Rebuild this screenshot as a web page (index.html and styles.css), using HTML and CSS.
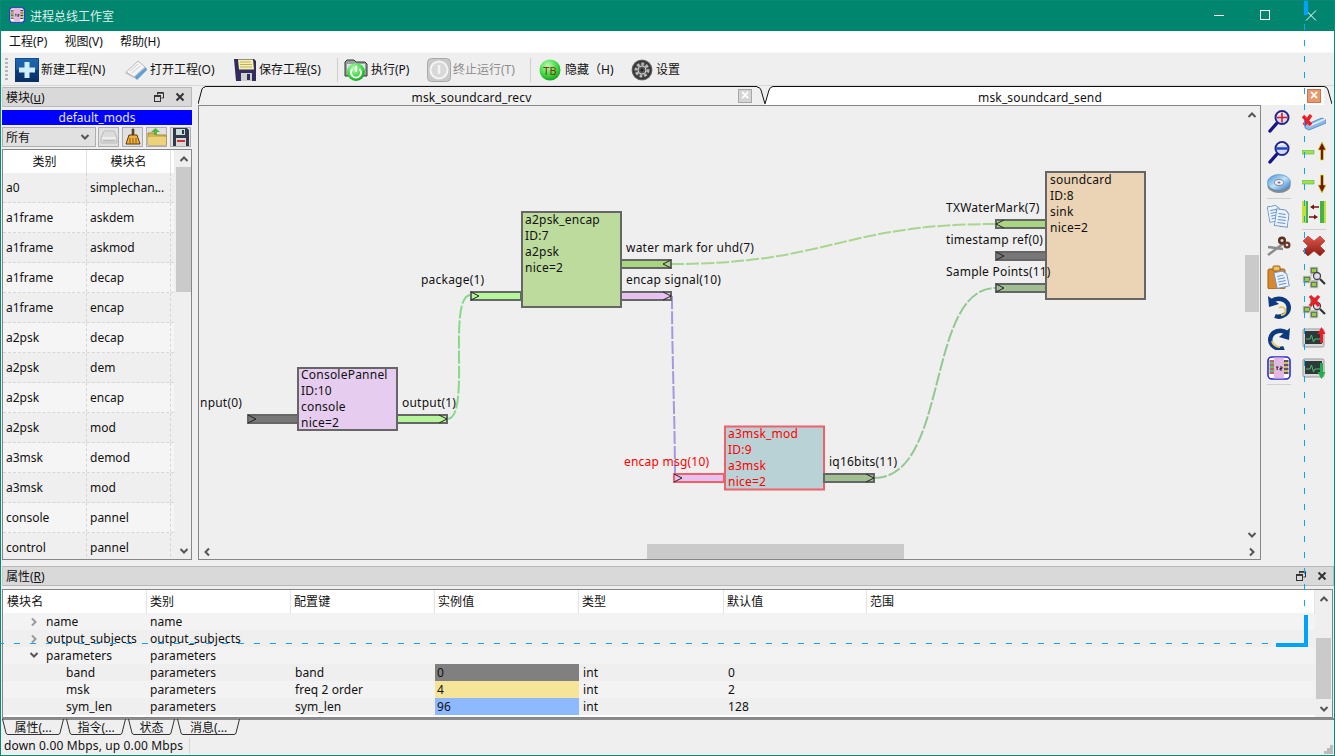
FILE: index.html
```html
<!DOCTYPE html>
<html lang="zh">
<head>
<meta charset="utf-8">
<title>进程总线工作室</title>
<link rel="stylesheet" href="styles.css">
</head>
<body>
<svg class="defs" aria-hidden="true">
  <defs>
    <linearGradient id="gBlue" x1="0" y1="0" x2="0" y2="1"><stop offset="0" stop-color="#0b4f96"/><stop offset="1" stop-color="#0a2f63"/></linearGradient>
    <radialGradient id="gGreen" cx=".4" cy=".3" r=".8"><stop offset="0" stop-color="#b8ffb0"/><stop offset=".6" stop-color="#35d53a"/><stop offset="1" stop-color="#0c8f1a"/></radialGradient>
    <radialGradient id="gGear" cx=".5" cy=".5" r=".55"><stop offset="0" stop-color="#8a8a8a"/><stop offset=".75" stop-color="#333"/><stop offset="1" stop-color="#aaa"/></radialGradient>
    <linearGradient id="gCd" x1="0" y1="0" x2="1" y2="1"><stop offset="0" stop-color="#3f8fd8"/><stop offset=".5" stop-color="#bfe2f8"/><stop offset="1" stop-color="#2070c0"/></linearGradient>
    <linearGradient id="gRed" x1="0" y1="0" x2="0" y2="1"><stop offset="0" stop-color="#e2564a"/><stop offset="1" stop-color="#8a1c12"/></linearGradient>
    <symbol id="i-module" viewBox="0 0 24 24">
      <rect x="1" y="1" width="22" height="22" rx="4" fill="#fff" stroke="#2a2ad8" stroke-width="1.6"/>
      <rect x="7" y="1.5" width="10" height="21" fill="#e3b9e3"/>
      <path d="M2.5 5h4.500M2.500 9h4.500M2.500 13h4.500M2.500 17h4.500" stroke="#a33" stroke-width="1.500"/>
      <path d="M2.500 7h4.500M2.500 11h4.500M2.500 15h4.500" stroke="#3a3" stroke-width="1.500"/>
      <path d="M17 5h4.500M17 9h4.500M17 13h4.500M17 17h4.500" stroke="#222" stroke-width="1.500"/>
      <path d="M17 7h4.500M17 11h4.500M17 15h4.500" stroke="#c9a227" stroke-width="1.500"/>
      <path d="M9 11h2.500M10.200 11v3M13 11h2v1.500h-2v1.500h2" fill="none" stroke="#222" stroke-width="1"/>
    </symbol>
    <symbol id="i-float" viewBox="0 0 10 10">
      <path d="M3.500 2.500V.5h6v5.500H7.500" fill="none" stroke="#333" stroke-width="1"/>
      <path d="M3 1h6" stroke="#333" stroke-width="1.500"/>
      <rect x=".5" y="3.500" width="6" height="6" fill="none" stroke="#333"/>
      <path d="M.5 4.200h6" stroke="#333" stroke-width="1.500"/>
    </symbol>
    <symbol id="i-close" viewBox="0 0 10 10">
      <path d="M1.500 1.500l7 7M8.500 1.500l-7 7" stroke="#333" stroke-width="2"/>
    </symbol>
    <symbol id="i-up" viewBox="0 0 10 6">
      <path d="M1.500 5L5 1.500 8.500 5" fill="none" stroke="#555" stroke-width="2"/>
    </symbol>
    <symbol id="i-down" viewBox="0 0 10 6">
      <path d="M1.500 1L5 4.500 8.500 1" fill="none" stroke="#555" stroke-width="2"/>
    </symbol>
    <symbol id="i-left" viewBox="0 0 6 10">
      <path d="M5 1.500L1.500 5 5 8.500" fill="none" stroke="#555" stroke-width="2"/>
    </symbol>
    <symbol id="i-right" viewBox="0 0 6 10">
      <path d="M1 1.500L4.500 5 1 8.500" fill="none" stroke="#555" stroke-width="2"/>
    </symbol>
    <symbol id="i-mag" viewBox="0 0 24 24">
      <path d="M10.500 13.500L3 22" stroke="#14148c" stroke-width="3.400" stroke-linecap="round"/>
      <circle cx="15" cy="8.500" r="6.500" fill="#d3dcf2" stroke="#24248f" stroke-width="2"/>
      <path d="M11.500 5.500a5 5 0 0 1 6-1" fill="none" stroke="#fff" stroke-width="1.200"/>
    </symbol>
    <symbol id="i-doc" viewBox="0 0 14 18">
      <path d="M.5.500h9l4 4v13H.5z" fill="#eaf3ff" stroke="#6d93c8"/>
      <path d="M3 5h7M3 8h8M3 11h8M3 14h8" stroke="#6d93c8"/>
    </symbol>
    <symbol id="i-net" viewBox="0 0 24 24">
      <path d="M6 15L12 6l4 10z" fill="none" stroke="#999"/>
      <rect x="8" y="2" width="8" height="7" fill="#6c7a5c" stroke="#ddd"/>
      <rect x="1" y="11" width="8" height="7" fill="#6c7a5c" stroke="#ddd"/>
      <rect x="8" y="16" width="8" height="7" fill="#6c7a5c" stroke="#ddd"/>
      <rect x="10" y="4" width="4" height="3" fill="#8fd13f"/>
      <rect x="3" y="13" width="4" height="3" fill="#8fd13f"/>
      <rect x="10" y="18" width="4" height="3" fill="#8fd13f"/>
      <circle cx="15" cy="11" r="3.500" fill="#dde" stroke="#444" stroke-width="1.300"/>
      <path d="M18 14l5 5" stroke="#333" stroke-width="2.200"/>
    </symbol>
    <symbol id="i-mon" viewBox="0 0 24 24">
      <rect x="1" y="3" width="21" height="18" rx="1.500" fill="#d8d8d8" stroke="#999"/>
      <rect x="3" y="5" width="17" height="13" fill="#2c3a3c"/>
      <path d="M4 13h4l1.500-4 2 7 1.500-3h6" fill="none" stroke="#58b86a"/>
    </symbol>
  </defs>
</svg>

<div class="window">
  <header class="titlebar">
    <svg class="title-icon" width="16" height="16"><use href="#i-module"/></svg>
    <span class="title-text">进程总线工作室</span>
    <div class="win-controls">
      <svg class="win-btn" width="46" height="30" viewBox="0 0 46 30"><path d="M18 14.500h10" stroke="#fff"/></svg>
      <svg class="win-btn" width="46" height="30" viewBox="0 0 46 30"><rect x="18.500" y="9.500" width="9" height="9" fill="none" stroke="#fff"/></svg>
      <svg class="win-btn" width="46" height="30" viewBox="0 0 46 30"><path d="M18 9.500l10 10M28 9.500l-10 10" stroke="#fff"/></svg>
    </div>
  </header>

  <nav class="menubar">
    <span class="menu-item">工程(P)</span>
    <span class="menu-item">视图(V)</span>
    <span class="menu-item">帮助(H)</span>
  </nav>

  <div class="toolbar">
    <span class="grip"></span>
    <div class="tool t-new">
      <svg width="24" height="24" viewBox="0 0 24 24"><rect width="24" height="24" fill="url(#gBlue)"/><rect x="1" y="1" width="22" height="11" fill="#2f7cc4" opacity=".5"/><path d="M12 4v16M4 12h16" stroke="#cfeeff" stroke-width="5"/></svg>
      <span>新建工程(N)</span>
    </div>
    <div class="tool t-open">
      <svg width="24" height="24" viewBox="0 0 24 24"><path d="M1 15L11 7l9 6-8 8z" fill="#bbb"/><path d="M2 14L14 3l7 6L10 19z" fill="#f4f4f4" stroke="#bbb"/><path d="M11 19L22 9l1 3-10 10z" fill="#5d9fd6"/><path d="M6 13l8-7M8 15l8-7" stroke="#ccc"/></svg>
      <span>打开工程(O)</span>
    </div>
    <div class="tool t-save">
      <svg width="24" height="24" viewBox="0 0 24 24"><path d="M1 1h20l2 2v20H3z" fill="#312b5e"/><path d="M5 1.500h15l1 10H6z" fill="#f8f0a8"/><path d="M7 4h11M7 6.500h12M7 9h12" stroke="#b9b070"/><rect x="8" y="15" width="11" height="8" fill="#cfcfcf"/><rect x="14" y="16" width="3" height="6" fill="#312b5e"/></svg>
      <span>保存工程(S)</span>
    </div>
    <span class="tool-sep"></span>
    <div class="tool t-run">
      <svg width="24" height="24" viewBox="0 0 24 24"><path d="M1 4l2-2h7l2 2h9l2 2v12H1z" fill="#9aa0a0" stroke="#333"/><rect x="3" y="6" width="18" height="10" fill="#d8e6e6"/><circle cx="12" cy="14" r="9" fill="url(#gGreen)"/><path d="M8.500 11a5 5 0 1 0 7 0" fill="none" stroke="#fff" stroke-width="1.800"/><path d="M12 8v6" stroke="#fff" stroke-width="2"/></svg>
      <span>执行(P)</span>
    </div>
    <div class="tool t-stop tool-off">
      <svg width="24" height="24" viewBox="0 0 24 24"><rect x=".5" y=".5" width="23" height="23" rx="4" fill="#c9c9c9" stroke="#aaa"/><circle cx="12" cy="12" r="8.500" fill="#d8d8d8" stroke="#f4f4f4" stroke-width="2"/><path d="M12 7v9" stroke="#f4f4f4" stroke-width="2.500"/></svg>
      <span>终止运行(T)</span>
    </div>
    <span class="tool-sep sep2"></span>
    <div class="tool t-hide">
      <svg width="22" height="22" viewBox="0 0 22 22"><circle cx="11" cy="11" r="10.500" fill="url(#gGreen)"/><text class="tb-text" x="11" y="15.500" text-anchor="middle">TB</text></svg>
      <span>隐藏（H)</span>
    </div>
    <div class="tool t-set">
      <svg width="22" height="22" viewBox="0 0 22 22"><circle cx="11" cy="11" r="10.500" fill="url(#gGear)"/><circle cx="11" cy="11" r="6" fill="none" stroke="#bbb" stroke-width="3" stroke-dasharray="2.500 2"/><circle cx="11" cy="11" r="4" fill="#555" stroke="#ccc"/><circle cx="11" cy="11" r="1.500" fill="#222"/></svg>
      <span>设置</span>
    </div>
  </div>

  <main class="main">
    <aside class="left-dock">
      <div class="dock-title">
        <span class="dock-name">模块(<u>u</u>)</span>
        <svg class="dock-ic" width="10" height="10"><use href="#i-float"/></svg>
        <svg class="dock-ic dock-x" width="10" height="10"><use href="#i-close"/></svg>
      </div>
      <div class="mods-bar">default_mods</div>
      <div class="combo-row">
        <div class="combo"><span class="combo-text">所有</span><svg width="10" height="6"><use href="#i-down"/></svg></div>
        <div class="icon-btn"><svg width="18" height="16" viewBox="0 0 18 16"><path d="M4 2h10l3 7v5H1V9z" fill="#dcdcdc" stroke="#bbb"/><path d="M2 9h14" stroke="#fff"/><rect x="3" y="11" width="12" height="1.500" fill="#bbb"/></svg></div>
        <div class="icon-btn"><svg width="18" height="18" viewBox="0 0 18 18"><path d="M8 1h2v6H8z" fill="#7a4a12" stroke="#333" stroke-width=".6"/><path d="M5 7h8l3 9H2z" fill="#f2b23c" stroke="#5a3a10"/><path d="M6 10v6M9 10v6M12 10v6" stroke="#8a5a14"/></svg></div>
        <div class="icon-btn"><svg width="20" height="18" viewBox="0 0 20 18"><path d="M1 5h6l2 2h10v10H1z" fill="#d9b550" stroke="#a8853a"/><path d="M1 9h18v8H1z" fill="#ecd27a"/><path d="M7 7V4H4l4.500-4L13 4h-3v3z" fill="#4cb83c"/></svg></div>
        <div class="icon-btn"><svg width="16" height="18" viewBox="0 0 16 18"><path d="M0 0h14l2 2v16H0z" fill="#2c3a4c"/><rect x="3" y="1" width="9" height="6" fill="#cdd"/><rect x="3" y="10" width="10" height="8" fill="#d9d9d9"/><rect x="9" y="2" width="2" height="4" fill="#2c3a4c"/><rect x="4" y="12" width="8" height="2" fill="#c33"/></svg></div>
      </div>
      <div class="mod-table">
        <div class="mod-body">
          <div class="mod-row mod-head"><span>类别</span><span>模块名</span></div>
          <div class="mod-row"><span>a0</span><span>simplechan...</span></div>
          <div class="mod-row alt"><span>a1frame</span><span>askdem</span></div>
          <div class="mod-row"><span>a1frame</span><span>askmod</span></div>
          <div class="mod-row alt"><span>a1frame</span><span>decap</span></div>
          <div class="mod-row"><span>a1frame</span><span>encap</span></div>
          <div class="mod-row alt"><span>a2psk</span><span>decap</span></div>
          <div class="mod-row"><span>a2psk</span><span>dem</span></div>
          <div class="mod-row alt"><span>a2psk</span><span>encap</span></div>
          <div class="mod-row"><span>a2psk</span><span>mod</span></div>
          <div class="mod-row alt"><span>a3msk</span><span>demod</span></div>
          <div class="mod-row"><span>a3msk</span><span>mod</span></div>
          <div class="mod-row alt"><span>console</span><span>pannel</span></div>
          <div class="mod-row"><span>control</span><span>pannel</span></div>
        </div>
        <div class="vscroll vs-mods">
          <div class="sb-btn"><svg width="10" height="6"><use href="#i-up"/></svg></div>
          <div class="sb-track"><div class="sb-thumb"></div></div>
          <div class="sb-btn"><svg width="10" height="6"><use href="#i-down"/></svg></div>
        </div>
      </div>
    </aside>

    <section class="center">
      <div class="tabbar">
        <div class="tab tab-a">
          <svg class="tab-edge" width="7" height="19" viewBox="0 0 7 19"><path d="M0 18L4 3Q5 1 7 1" fill="#f0f0f0" stroke="#111"/></svg>
          <div class="tab-body"><span class="tab-label">msk_soundcard_recv</span><span class="tab-x">×</span></div>
          <svg class="tab-edge" width="8" height="19" viewBox="0 0 8 19"><path d="M0 1Q3 1 4 4L8 18" fill="#f0f0f0" stroke="#111"/></svg>
        </div>
        <div class="tab tab-b">
          <svg class="tab-edge" width="8" height="19" viewBox="0 0 8 19"><path d="M0 18L4 4Q5 1 8 .5V19H0z" fill="#fff"/><path d="M0 18L4 4Q5 1 8 .5" fill="none" stroke="#111"/></svg>
          <div class="tab-body"><span class="tab-label">msk_soundcard_send</span><span class="tab-x tab-x-on">×</span></div>
          <svg class="tab-edge" width="8" height="19" viewBox="0 0 8 19"><path d="M0 .5Q3 .5 4 4L8 18" fill="none" stroke="#111"/></svg>
        </div>
      </div>
      <div class="canvas-frame">
        <div class="canvas-top">
          <svg class="graph" width="1045" height="437" viewBox="199 106 1045 437">
            <g class="wires">
              <path class="w-green" d="M447 419C472 419 446 295 471 295"/>
              <path class="w-olive" d="M671 264C830 264 840 224 996 224"/>
              <path class="w-purple" d="M672 296C672 360 675 420 675 478"/>
              <path class="w-sage" d="M874 478C950 478 925 288 996 288"/>
            </g>

            <rect class="port p-gray" x="248" y="415" width="50" height="8"/>
            <path class="arrow" d="M248 415l8 4-8 4"/>
            <rect class="node n-purple" x="298" y="368" width="99" height="62"/>
            <rect class="port p-light" x="397" y="415" width="50" height="8"/>
            <path class="arrow" d="M439 415l8 4-8 4"/>
            <text class="lbl" x="200" y="407">nput(0)</text>
            <text class="lbl" x="402" y="407">output(1)</text>
            <text class="lbl" x="301" y="379">ConsolePannel</text>
            <text class="lbl" x="301" y="395">ID:10</text>
            <text class="lbl" x="301" y="411">console</text>
            <text class="lbl" x="301" y="427">nice=2</text>

            <rect class="port p-light" x="471" y="292" width="50" height="8"/>
            <path class="arrow" d="M471 292l8 4-8 4"/>
            <rect class="node n-green" x="522" y="212" width="99" height="95"/>
            <rect class="port p-olive" x="621" y="260" width="50" height="8"/>
            <path class="arrow" d="M671 260l-8 4 8 4"/>
            <rect class="port p-lilac" x="621" y="292" width="50" height="8"/>
            <path class="arrow" d="M663 292l8 4-8 4"/>
            <text class="lbl" x="421" y="284">package(1)</text>
            <text class="lbl" x="626" y="252">water mark for uhd(7)</text>
            <text class="lbl" x="626" y="284">encap signal(10)</text>
            <text class="lbl" x="525" y="224">a2psk_encap</text>
            <text class="lbl" x="525" y="240">ID:7</text>
            <text class="lbl" x="525" y="256">a2psk</text>
            <text class="lbl" x="525" y="272">nice=2</text>

            <rect class="port p-olive" x="996" y="220" width="50" height="8"/>
            <path class="arrow" d="M1004 220l-8 4 8 4"/>
            <rect class="port p-gray" x="996" y="252" width="50" height="8"/>
            <path class="arrow" d="M996 252l8 4-8 4"/>
            <rect class="port p-sage" x="996" y="284" width="50" height="8"/>
            <path class="arrow" d="M996 284l8 4-8 4"/>
            <rect class="node n-sand" x="1046" y="172" width="99" height="127"/>
            <text class="lbl" x="946" y="212">TXWaterMark(7)</text>
            <text class="lbl" x="946" y="244">timestamp ref(0)</text>
            <text class="lbl" x="946" y="276">Sample Points(11)</text>
            <text class="lbl" x="1050" y="184">soundcard</text>
            <text class="lbl" x="1050" y="200">ID:8</text>
            <text class="lbl" x="1050" y="216">sink</text>
            <text class="lbl" x="1050" y="232">nice=2</text>

            <rect class="port p-lilac p-sel" x="674" y="474" width="50" height="8"/>
            <path class="arrow" d="M674 474l8 4-8 4"/>
            <rect class="node n-teal" x="725" y="426.500" width="99" height="63"/>
            <rect class="port p-sage" x="824" y="474" width="50" height="8"/>
            <path class="arrow" d="M866 474l8 4-8 4"/>
            <text class="lbl lbl-red" x="624" y="466">encap msg(10)</text>
            <text class="lbl" x="829" y="466">iq16bits(11)</text>
            <text class="lbl lbl-red" x="728" y="438">a3msk_mod</text>
            <text class="lbl lbl-red" x="728" y="454">ID:9</text>
            <text class="lbl lbl-red" x="728" y="470">a3msk</text>
            <text class="lbl lbl-red" x="728" y="486">nice=2</text>
          </svg>
          <div class="vscroll vs-canvas">
            <div class="sb-btn"><svg width="10" height="6"><use href="#i-up"/></svg></div>
            <div class="sb-track"><div class="sb-thumb"></div></div>
            <div class="sb-btn"><svg width="10" height="6"><use href="#i-down"/></svg></div>
          </div>
        </div>
        <div class="hscroll">
          <div class="sb-btn"><svg width="6" height="10"><use href="#i-left"/></svg></div>
          <div class="hs-track"><div class="hs-thumb"></div></div>
          <div class="sb-btn"><svg width="6" height="10"><use href="#i-right"/></svg></div>
        </div>
      </div>
    </section>

    <aside class="side-tools">
      <div class="side-col">
        <div class="side-btn"><svg width="24" height="24" viewBox="0 0 24 24"><use href="#i-mag"/><path d="M15 3.500v10M10 8.500h10" stroke="#e01a1a" stroke-width="1.600"/></svg></div>
        <div class="side-btn"><svg width="24" height="24" viewBox="0 0 24 24"><use href="#i-mag"/><path d="M9.500 8.500h11" stroke="#1b3fd0" stroke-width="2.400"/></svg></div>
        <div class="side-btn"><svg width="24" height="24" viewBox="0 0 24 24"><ellipse cx="12" cy="15.500" rx="11.500" ry="7.500" fill="#8a8a8a"/><ellipse cx="12" cy="12.500" rx="11.500" ry="8" fill="url(#gCd)" stroke="#4b8ac4" stroke-width=".6"/><ellipse cx="12" cy="12.500" rx="4.500" ry="3" fill="#eef" stroke="#888"/><ellipse cx="12" cy="12.500" rx="1.500" ry="1" fill="#777"/></svg></div>
        <span class="side-sep"></span>
        <div class="side-btn"><svg width="24" height="24" viewBox="0 0 24 24"><g transform="rotate(-10 8 10)"><use href="#i-doc" x="1" y="1" width="13" height="17"/></g><g transform="rotate(8 15 14)"><use href="#i-doc" x="8" y="5" width="14" height="18"/></g></svg></div>
        <div class="side-btn"><svg width="24" height="24" viewBox="0 0 24 24"><path d="M1 21L17 9M1 13l15 2" stroke="#8b8b8b" stroke-width="2.500"/><circle cx="15" cy="6.500" r="4" fill="#5b2e22"/><circle cx="20" cy="11" r="3.500" fill="#6b3a2a"/><circle cx="15" cy="6.500" r="1.500" fill="#ddd"/><circle cx="20" cy="11" r="1.300" fill="#ddd"/></svg></div>
        <div class="side-btn"><svg width="24" height="24" viewBox="0 0 24 24"><rect x="1" y="4" width="17" height="20" rx="1.500" fill="#d9892b" stroke="#9a5a16"/><rect x="6" y="1" width="7" height="5" rx="1" fill="#f1c356" stroke="#9a5a16"/><g transform="rotate(-12 14 14)"><use href="#i-doc" x="7" y="6" width="15" height="17"/></g></svg></div>
        <div class="side-btn"><svg width="24" height="24" viewBox="0 0 24 24"><path d="M5 6a10 9 0 1 1 3 15" fill="none" stroke="#0d3a7c" stroke-width="4.500"/><path d="M12 13a4 4 0 1 1 2 7" fill="none" stroke="#e8c763" stroke-width="2"/><path d="M1 1l1 11 10-3z" fill="#0d3a7c"/></svg></div>
        <div class="side-btn"><svg width="24" height="24" viewBox="0 0 24 24"><path d="M20 7a10 9 0 1 0-3 15" fill="none" stroke="#0d3a7c" stroke-width="4.500"/><path d="M5 15a8 7 0 0 0 8 6" fill="none" stroke="#e8c763" stroke-width="2"/><path d="M23 2l-1 12-10-3z" fill="#0d3a7c"/></svg></div>
        <div class="side-btn"><svg width="24" height="24"><use href="#i-module"/></svg></div>
        <span class="side-sep"></span>
      </div>
      <div class="side-col">
        <div class="side-btn"><svg width="24" height="24" viewBox="0 0 24 24"><path d="M3 16L20 9l4 2v3L7 21l-4-2z" fill="#8fb9e6" stroke="#5a8fca"/><path d="M7 17l16-7" stroke="#e4f0fb" stroke-width="1.500"/><path d="M1 7l8 9M9 6l-7 10" stroke="#ee1c25" stroke-width="3.400"/></svg></div>
        <div class="side-btn"><svg width="24" height="24" viewBox="0 0 24 24"><rect x="0" y="10.500" width="12" height="3.500" fill="#9fe34a" stroke="#5fb04a" stroke-width=".6"/><path d="M20 2l4 8h-2.500v10h-3V10H16z" fill="#7b1212" stroke="#cfe028" stroke-width=".8"/></svg></div>
        <div class="side-btn"><svg width="24" height="24" viewBox="0 0 24 24"><rect x="0" y="10.500" width="12" height="3.500" fill="#9fe34a" stroke="#5fb04a" stroke-width=".6"/><path d="M20 23l4-8h-2.500V5h-3v10H16z" fill="#7b1212" stroke="#cfe028" stroke-width=".8"/></svg></div>
        <div class="side-btn"><svg width="24" height="24" viewBox="0 0 24 24"><rect x="0" y="1" width="4" height="22" fill="#c4e03a"/><rect x="4" y="1" width="2" height="22" fill="#45b34a"/><rect x="18" y="1" width="4" height="22" fill="#45b34a"/><rect x="22" y="1" width="2" height="22" fill="#c4e03a"/><path d="M8 7l4-2.500v1.800h5v1.400h-5v1.800zM16 17l-4-2.500v1.800H7v1.400h5v1.800z" fill="#7b1212"/></svg></div>
        <span class="side-sep"></span>
        <div class="side-btn"><svg width="24" height="24" viewBox="0 0 24 24"><path d="M6 2l6 5 6-5 5 5-5 5 5 5-5 5-6-5-6 5-5-5 5-5-5-5z" fill="url(#gRed)" stroke="#a33" stroke-width=".6"/></svg></div>
        <div class="side-btn"><svg width="24" height="24"><use href="#i-net"/></svg></div>
        <div class="side-btn"><svg width="24" height="24"><use href="#i-net"/><path d="M8 1l9 10M17 1L8 11" stroke="#ee1c25" stroke-width="3.200"/></svg></div>
        <div class="side-btn"><svg width="24" height="24" viewBox="0 0 24 24"><use href="#i-mon"/><path d="M19.500 1l4 7h-2.500v9h-3V8H15.500z" fill="#ee1c25"/></svg></div>
        <div class="side-btn"><svg width="24" height="24" viewBox="0 0 24 24"><use href="#i-mon"/><path d="M19.500 23l4-7h-2.500V7h-3v9H15.500z" fill="#22b04c"/></svg></div>
      </div>
    </aside>
  </main>

  <div class="dock-title dock-wide">
    <span class="dock-name">属性(<u>R</u>)</span>
    <svg class="dock-ic" width="10" height="10"><use href="#i-float"/></svg>
    <svg class="dock-ic dock-x2" width="10" height="10"><use href="#i-close"/></svg>
  </div>

  <div class="prop-table">
    <div class="prop-body">
      <div class="prop-row prop-head"><span>模块名</span><span>类别</span><span>配置键</span><span>实例值</span><span>类型</span><span>默认值</span><span>范围</span></div>
      <div class="prop-row r1"><span class="tree l1"><svg class="ch-shut" width="6" height="10"><use href="#i-right"/></svg>name</span><span>name</span></div>
      <div class="prop-row r2"><span class="tree l1"><svg class="ch-shut" width="6" height="10"><use href="#i-right"/></svg>output_subjects</span><span>output_subjects</span></div>
      <div class="prop-row r1"><span class="tree l1"><svg class="ch-open" width="10" height="6"><use href="#i-down"/></svg>parameters</span><span>parameters</span></div>
      <div class="prop-row r2"><span class="tree l2">band</span><span>parameters</span><span>band</span><span class="val v-gray">0</span><span>int</span><span>0</span></div>
      <div class="prop-row r1"><span class="tree l2">msk</span><span>parameters</span><span>freq 2 order</span><span class="val v-yellow">4</span><span>int</span><span>2</span></div>
      <div class="prop-row r2"><span class="tree l2">sym_len</span><span>parameters</span><span>sym_len</span><span class="val v-blue">96</span><span>int</span><span>128</span></div>
    </div>
    <div class="vscroll vs-prop">
      <div class="sb-btn"><svg width="10" height="6"><use href="#i-up"/></svg></div>
      <div class="sb-track"><div class="sb-thumb"></div></div>
      <div class="sb-btn"><svg width="10" height="6"><use href="#i-down"/></svg></div>
    </div>
  </div>

  <div class="bottom-tabs">
    <div class="btab btab-on"><svg width="6" height="16" viewBox="0 0 6 16"><path d="M.5 0L4 14q.5 1.500 2 1.500" fill="none" stroke="#333"/></svg><span class="btab-body b1">属性(...</span><svg width="6" height="16" viewBox="0 0 6 16"><path d="M0 15.500q1.500 0 2-1.500L5.500 0" fill="none" stroke="#333"/></svg></div>
    <div class="btab"><svg width="6" height="16" viewBox="0 0 6 16"><path d="M.5 0L4 14q.5 1.500 2 1.500" fill="none" stroke="#333"/></svg><span class="btab-body b2">指令(...</span><svg width="6" height="16" viewBox="0 0 6 16"><path d="M0 15.500q1.500 0 2-1.500L5.500 0" fill="none" stroke="#333"/></svg></div>
    <div class="btab"><svg width="6" height="16" viewBox="0 0 6 16"><path d="M.5 0L4 14q.5 1.500 2 1.500" fill="none" stroke="#333"/></svg><span class="btab-body b3">状态</span><svg width="6" height="16" viewBox="0 0 6 16"><path d="M0 15.500q1.500 0 2-1.500L5.500 0" fill="none" stroke="#333"/></svg></div>
    <div class="btab"><svg width="6" height="16" viewBox="0 0 6 16"><path d="M.5 0L4 14q.5 1.500 2 1.500" fill="none" stroke="#333"/></svg><span class="btab-body b4">消息(...</span><svg width="6" height="16" viewBox="0 0 6 16"><path d="M0 15.500q1.500 0 2-1.500L5.500 0" fill="none" stroke="#333"/></svg></div>
  </div>

  <footer class="statusbar">
    <span class="status-text">down 0.00 Mbps, up 0.00 Mbps</span>
    <svg class="size-grip" width="9" height="9" viewBox="0 0 9 9"><path d="M6 0h3v3H6zM3 3h3v3H3zM6 3h3v3H6zM0 6h3v3H0zM3 6h3v3H3zM6 6h3v3H6z" fill="#bbb"/></svg>
  </footer>

  <div class="drag drag-v"></div>
  <div class="drag drag-h"></div>
  <div class="drag drag-top"></div>
  <div class="drag drag-cv"></div>
  <div class="drag drag-ch"></div>
</div>
</body>
</html>
```

FILE: styles.css
```css
* { box-sizing: border-box; }
html, body { margin: 0; padding: 0; }
body {
  width: 1335px;
  height: 756px;
  overflow: hidden;
  font-family: "Noto Sans", "Noto Sans CJK SC", sans-serif;
  font-size: 12px;
  line-height: 16px;
  color: #111;
}
.defs { position: absolute; width: 0; height: 0; }
svg { display: block; flex: none; }

.window {
  position: relative;
  width: 1335px;
  height: 756px;
  border: 1px solid #0a8a76;
  background: #efefef;
  display: flex;
  flex-direction: column;
  overflow: hidden;
}

/* title bar */
.titlebar {
  height: 30px;
  background: #00856f;
  display: flex;
  align-items: center;
  padding-left: 8px;
  flex: none;
}
.title-icon { margin-top: -2px; }
.title-text { margin-left: 5px; color: #dff1ec; font-family: "Noto Sans CJK SC", sans-serif; }
.win-controls { margin-left: auto; display: flex; }

/* menu */
.menubar {
  height: 21px;
  background: #fff;
  display: flex;
  align-items: center;
  padding-left: 8px;
  gap: 14.500px;
  flex: none;
}
.menu-item { width: 41px; white-space: nowrap; }

/* toolbar */
.toolbar {
  height: 34px;
  border-top: 1px solid #f6f6f6;
  border-bottom: 1px solid #d8d8d8;
  padding-top: 1px;
  background: #efefef;
  display: flex;
  align-items: center;
  flex: none;
  padding-left: 4px;
}
.grip {
  width: 3px;
  height: 24px;
  background: repeating-linear-gradient(to bottom, #b5b5b5 0 2px, transparent 2px 4px);
  margin-right: 7px;
}
.tool { display: flex; align-items: center; gap: 2px; white-space: nowrap; }
.t-new { width: 109px; }
.t-open { width: 109px; }
.t-save { width: 104px; }
.tool-sep { width: 1px; height: 24px; background: #cfcfcf; margin-right: 6px; }
.t-run { width: 83px; gap: 3px; }
.t-stop { width: 103px; }
.sep2 { margin-right: 8px; }
.t-hide { width: 92px; gap: 4px; }
.t-set { gap: 3px; }
.tool-off { color: #8c8c8c; }
.tb-text { font: 11px "Noto Sans", sans-serif; fill: #8a2a10; }

/* main area */
.main { height: 480px; display: flex; flex: none; }
.left-dock { width: 190px; margin-left: 1px; padding-top: 1px; display: flex; flex-direction: column; flex: none; }

.dock-title {
  height: 20px;
  background: #d9d9d9;
  border: 1px solid #b8b8b8;
  border-left: 1px solid #c8c8c8;
  display: flex;
  align-items: center;
  padding-left: 3px;
  flex: none;
}
.dock-name { flex: 1; padding-top: 2px; }
.dock-ic { margin-right: 11px; }
.dock-x { margin-right: 6px; }

.mods-bar {
  margin-top: 3px;
  height: 15px;
  background: #0000ff;
  color: #e6e6ff;
  text-align: center;
  line-height: 15px;
  flex: none;
}
.combo-row { margin-top: 2px; height: 20px; display: flex; gap: 3px; flex: none; }
.combo {
  width: 94px;
  margin-right: -1px;
  background: #e1e1e1;
  border: 1px solid #adadad;
  display: flex;
  align-items: center;
  justify-content: space-between;
  padding: 0 5px 0 3px;
}
.combo-text { padding-top: 2px; }
.icon-btn {
  width: 21px;
  background: #e1e1e1;
  border: 1px solid #adadad;
  display: flex;
  align-items: center;
  justify-content: center;
}
.mod-table {
  margin-top: 2px;
  height: 411px;
  border: 1px solid #85858a;
  display: flex;
  flex: none;
  overflow: hidden;
}
.mod-body { width: 171px; overflow: hidden; flex: none; }
.mod-row {
  height: 30px;
  display: grid;
  grid-template-columns: 84px 84px;
  background: #efefef;
  border-bottom: 1px dashed #d6d6d6;
}
.mod-row.alt { background: #f5f5f5; }
.mod-row > span {
  padding-left: 3px;
  line-height: 30px;
  border-right: 1px dashed #d6d6d6;
  white-space: nowrap;
  overflow: hidden;
}
.mod-head {
  height: 23px;
  background: #fff;
  border-bottom: 0;
}
.mod-head > span {
  text-align: center;
  padding-left: 0;
  line-height: 24px;
  border-right: 1px solid #e2e2e2;
}

/* scrollbars */
.vscroll { background: #efefef; display: flex; flex-direction: column; flex: none; }
.sb-btn { flex: none; display: flex; align-items: center; justify-content: center; }
.vscroll .sb-btn { height: 17px; }
.sb-track { flex: 1; padding: 0 1px; }
.sb-thumb { background: #cacaca; }
.vs-mods { width: 17px; margin-left: 1px; }
.vs-mods .sb-thumb { height: 125px; }
.vs-canvas { width: 16px; }
.vs-canvas .sb-track { padding-top: 132px; }
.vs-canvas .sb-thumb { height: 57px; }
.vs-prop { width: 17px; }
.vs-prop .sb-track { padding-top: 31px; }
.vs-prop .sb-thumb { height: 61px; }
.hscroll { height: 15px; margin-top: 1px; display: flex; background: #efefef; flex: none; }
.hscroll .sb-btn { width: 16px; }
.hs-track { flex: 1; padding: 0 340px 0 432px; }
.hs-thumb { height: 15px; background: #cacaca; }

/* center */
.center { width: 1063px; margin-left: 6px; display: flex; flex-direction: column; flex: none; }
.tabbar { height: 19px; display: flex; flex: none; position: relative; z-index: 1; }
.tab { display: flex; height: 19px; flex: none; }
.tab-a { width: 567px; }
.tab-b { width: 567px; margin-left: 0; }
.tab-body {
  flex: 1;
  border-top: 1px solid #111;
  display: flex;
  align-items: center;
  position: relative;
}
.tab-a .tab-body { background: #f0f0f0; }
.tab-b .tab-body { background: #fff; }
.tab-label { flex: 1; text-align: center; padding-top: 3px; letter-spacing: .15px; }
.tab-x {
  width: 14px;
  height: 14px;
  margin-right: 5px;
  background: #d4d4d4;
  border: 1px solid #a8a8a8;
  color: #fff;
  font: bold 14px/11px "Liberation Sans", sans-serif;
  text-align: center;
}
.tab-x-on { background: #e9986d; border-color: #c8784a; margin-right: 3px; }

.canvas-frame {
  height: 455px;
  border: 1px solid #85858a;
  background: #efefef;
  flex: none;
}
.canvas-top { height: 437px; display: flex; }
.graph { background: #efefef; }

/* graph */
.wires path { fill: none; stroke-width: 2; stroke-dasharray: 13 2; }
.w-green { stroke: #86da86; }
.w-olive { stroke: #a9d68e; }
.w-purple { stroke: #a29ae0; }
.w-sage { stroke: #92c892; }
.port { stroke: #666; stroke-width: 2; }
.p-gray { fill: #777; }
.p-light { fill: #b5f59c; }
.p-olive { fill: #a9d480; }
.p-lilac { fill: #e5c2f0; }
.p-sage { fill: #a2bf94; }
.p-sel { stroke: #f0606a; }
.arrow { fill: none; stroke: #222; stroke-width: 1; }
.node { stroke: #666; stroke-width: 2; }
.n-purple { fill: #e6cdf0; }
.n-green { fill: #bcdb9c; }
.n-sand { fill: #ebd3b5; }
.n-teal { fill: #b9d2d6; stroke: #f0606a; }
.lbl { font-family: "Noto Sans", sans-serif; font-size: 12px; letter-spacing: .22px; fill: #111; }
.lbl-red { fill: #f00; }

/* side tools */
.side-tools { display: flex; padding-top: 20px; flex: none; }
.side-col { width: 35px; display: flex; flex-direction: column; align-items: center; }
.side-btn { width: 30px; height: 30.400px; display: flex; align-items: center; justify-content: center; flex: none; }
.side-sep { width: 24px; height: 1px; background: #cfcfcf; margin: 1px 0 1.600px; flex: none; }

/* bottom dock */
.dock-wide { margin: 0 0 0 1px; width: 1332px; }
.dock-wide .dock-ic { margin-right: 11px; }
.dock-wide .dock-x2 { margin-right: 6px; }

.prop-table {
  margin: 3px 0 0 1px;
  width: 1331px;
  height: 129px;
  border: 1px solid #85858a;
  background: #fff;
  display: flex;
  flex: none;
}
.prop-body { flex: 1; overflow: hidden; }
.prop-row {
  height: 17px;
  display: grid;
  grid-template-columns: 144px 144px 144px 144px 145px 143px 1fr;
  line-height: 17px;
  letter-spacing: .08px;
}
.prop-row > span { padding-left: 4px; white-space: nowrap; }
.prop-row > span:nth-child(2) { padding-left: 3px; }
.prop-head { height: 23px; line-height: 24px; background: #fff; }
.prop-head > span { border-right: 1px solid #e4e4e4; padding-left: 3px; }
.prop-head > span:first-child { padding-left: 4px; }
.r1 { background: #f3f3f3; }
.r2 { background: #efefef; }
.tree { position: relative; }
.prop-row .tree.l1 { padding-left: 43px; }
.prop-row .tree.l2 { padding-left: 63px; }
.tree svg { position: absolute; left: 28px; top: 4px; }
.tree .ch-shut { opacity: .55; }
.tree .ch-open { left: 26px; top: 5px; }
.prop-row .val { padding-left: 2px; }
.v-gray { background: #808080; }
.v-yellow { background: #f6e598; }
.v-blue { background: #8cb9ff; }

/* bottom tabs */
.bottom-tabs { height: 17px; margin-left: 1px; display: flex; gap: 2px; border-top: 2px solid #8a8a8a; flex: none; }
.btab { display: flex; height: 15px; margin-top: -1px; }
.btab svg { height: 16px; }
.btab-body { border-bottom: 1px solid #333; height: 16px; line-height: 17px; text-align: center; white-space: nowrap; }
.b1 { width: 50px; }
.b2 { width: 48px; }
.b3 { width: 35px; }
.b4 { width: 51px; }

/* status */
.statusbar {
  height: 19px;
  margin-top: 1px;
  display: flex;
  align-items: center;
  flex: none;
  padding-left: 3px;
  position: relative;
}
.status-text { width: 186px; border-right: 1px solid #d5d5d5; white-space: nowrap; letter-spacing: .14px; }
.size-grip { margin-left: auto; margin-right: 1px; align-self: flex-end; margin-bottom: 1px; }

/* window-drag rubber band lying over everything */
.drag { position: absolute; z-index: 5; }
.drag-v {
  left: 1303px;
  top: 7px;
  width: 1px;
  height: 607px;
  background: repeating-linear-gradient(to bottom, #0ea5f5 0 6px, transparent 6px 16px);
}
.drag-h {
  left: -3px;
  top: 642px;
  width: 1278px;
  height: 1px;
  background: repeating-linear-gradient(to right, #1b9fe8 0 6px, transparent 6px 16px);
}
.drag-top { left: 1303px; top: -1px; width: 4px; height: 15px; background: #00a2ff; }
.drag-cv { left: 1303px; top: 614px; width: 4px; height: 32px; background: #00a2ff; }
.drag-ch { left: 1275px; top: 642px; width: 32px; height: 4px; background: #00a2ff; }
```
